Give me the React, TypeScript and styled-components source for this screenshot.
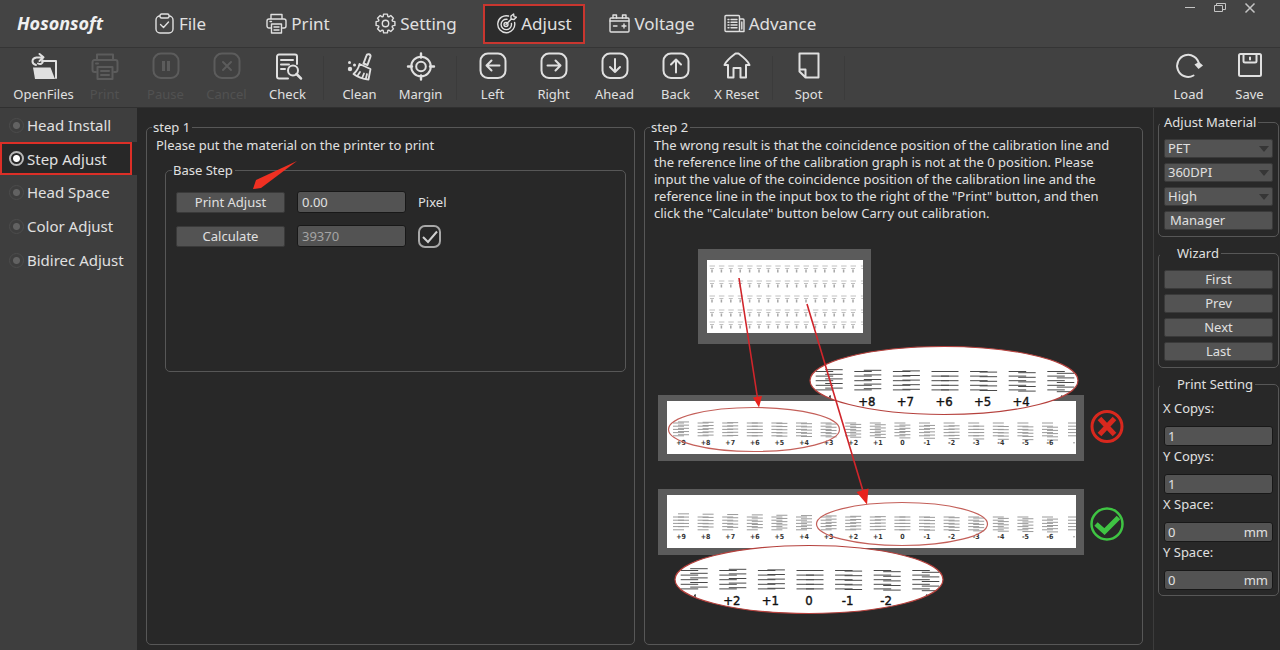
import React, { useState } from "react";
import styled, { createGlobalStyle, css } from "styled-components";

const GlobalStyle = createGlobalStyle`
  *, *::before, *::after { box-sizing: border-box; }
  body {
    margin: 0;
    background: #282828;
    color: #e0e0e0;
    font-family: "Noto Sans", "Open Sans", sans-serif;
    font-size: 13px;
    line-height: 18px;
  }
  button, input, select { font: inherit; color: inherit; }
`;

/* ---------- frame ---------- */

const Window = styled.div`
  min-height: 100vh;
  display: flex;
  flex-direction: column;
`;

const TitleBar = styled.header`
  position: relative;
  display: flex;
  height: 47px;
  background: #444444;
`;

const Logo = styled.div`
  width: 121px;
  padding: 10px 0 0 17px;
  font-family: "Open Sans", sans-serif;
  font-weight: 700;
  font-style: italic;
  font-size: 18px;
  line-height: 26px;
  color: #f0f0f0;
`;

const Menu = styled.nav`
  display: grid;
  grid-template-columns: repeat(6, 118px);
  align-items: center;
  justify-items: center;
`;

const MenuButton = styled.button<{ $active?: boolean }>`
  display: flex;
  align-items: center;
  gap: 4px;
  height: 40px;
  padding: 0 11px;
  border: 2px solid ${(p) => (p.$active ? "#c9362f" : "transparent")};
  background: ${(p) => (p.$active ? "#2c2c2c" : "transparent")};
  font-size: 17px;
  line-height: 24px;
`;

const WindowControls = styled.div`
  display: flex;
  gap: 8px;
  margin-left: auto;
  padding-right: 19px;
`;

const WindowButton = styled.button`
  display: block;
  width: 22px;
  height: 16px;
  padding: 0;
  border: 0;
  background: none;
  color: #c4c4c4;
`;

const Toolbar = styled.div`
  display: flex;
  height: 61px;
  padding: 4px 0 0 13px;
  border-top: 1px solid #353535;
  border-bottom: 1px solid #303030;
  background: #414141;
`;

const ToolButton = styled.button`
  display: flex;
  flex-direction: column;
  align-items: center;
  gap: 5px;
  width: 61px;
  padding: 0;
  border: 0;
  background: none;
  &:disabled { color: #5c5c5c; }
  &:disabled span { color: #515151; }
`;

const ToolLabel = styled.span`
  white-space: nowrap;
  line-height: 17px;
`;

const ToolDivider = styled.span`
  width: 11px;
  height: 44px;
  margin-top: 4px;
  background: linear-gradient(#3b3b3b, #3b3b3b) center / 1px 100% no-repeat;
`;

const ToolSpacer = styled.span`
  flex: 1;
`;

const Body = styled.div`
  flex: 1;
  display: grid;
  grid-template-columns: 137px minmax(0, 1fr) 127px;
`;

/* ---------- sidebar ---------- */

const Sidebar = styled.aside`
  display: flex;
  flex-direction: column;
  background: #3e3e3e;
`;

const SideItem = styled.label<{ $active: boolean }>`
  display: flex;
  align-items: center;
  gap: 3px;
  height: 34px;
  padding-left: 7px;
  border: 2px solid transparent;
  font-size: 15px;
  white-space: nowrap;
  ${(p) =>
    p.$active &&
    css`
      height: 33px;
      margin-right: 5px;
      border-color: #dc2f27;
      background: #282828;
      box-shadow: 5px 0 0 #282828;
    `}
`;

const SideRadio = styled.input`
  appearance: none;
  width: 15px;
  height: 15px;
  margin: 0;
  border: 1px solid #4c4c4c;
  border-radius: 50%;
  background: radial-gradient(circle, #626262 3px, transparent 4px);
  &:checked {
    border: 2px solid #b9b9b9;
    background: radial-gradient(circle, #ffffff 3px, transparent 4px);
  }
`;

/* ---------- groups ---------- */

const Main = styled.main`
  display: grid;
  grid-template-columns: 49fr 50fr;
  gap: 9px;
  padding: 10px 10px 5px 9px;
`;

const Group = styled.fieldset`
  min-width: 0;
  margin: 0;
  padding: 1px 8px 8px 9px;
  border: 1px solid #575757;
  border-radius: 5px;
`;

const GroupTitle = styled.legend<{ $indent?: number }>`
  margin-left: -4px;
  padding: 0 2px 0 ${(p) => p.$indent ?? 1}px;
  line-height: 18px;
`;

const BaseGroup = styled(Group)`
  min-height: 211px;
  margin-top: 7px;
  margin-left: 9px;
  padding: 12px 10px;
`;

const Note = styled.p`
  margin: 0;
  padding-right: 16px;
  line-height: 17px;
`;

const FormRows = styled.div`
  display: grid;
  grid-template-columns: 109px 109px auto;
  justify-content: start;
  align-items: center;
  gap: 12px;
`;

const PushButton = styled.button<{ $left?: boolean }>`
  width: 100%;
  height: ${(p) => (p.$left ? 19 : 21)}px;
  padding: 0 5px;
  border: 1px solid #3a3a3a;
  border-radius: 2px;
  background: #535353;
  line-height: 17px;
  text-align: ${(p) => (p.$left ? "left" : "center")};
`;

const WizardButton = styled(PushButton)`
  height: 19px;
`;

const Field = styled.input`
  min-width: 0;
  width: 100%;
  height: 22px;
  padding: 0 4px;
  border: 1px solid #181818;
  border-radius: 3px;
  background: #535353;
  outline: none;
  &:disabled { color: #a4a4a4; }
`;

const Confirm = styled.label`
  position: relative;
  display: block;
  width: 23px;
  height: 21px;
  svg { position: absolute; left: 0; top: -1px; pointer-events: none; }
`;

const RoundCheck = styled.input`
  appearance: none;
  display: block;
  width: 23px;
  height: 23px;
  margin: -1px 0;
  border: 2px solid #a8a8a8;
  border-radius: 7px;
`;

const StepOne = styled.div`
  position: relative;
`;

const Pointer = styled.svg`
  position: absolute;
  left: 96px;
  top: 23px;
  pointer-events: none;
`;

const Illustration = styled.svg`
  display: block;
  width: 480px;
  max-width: 100%;
  height: auto;
  margin-top: 18px;
`;

/* ---------- right panel ---------- */

const Panel = styled.aside`
  display: flex;
  flex-direction: column;
  gap: 7px;
  padding: 5px 1px 0 4px;
  border-left: 1px solid #3c3c3c;
`;

const PanelGroup = styled(Group)`
  display: flex;
  flex-direction: column;
  gap: 5px;
  padding: 8px 5px 6px;
`;

const PanelForm = styled(Group)`
  padding: 6px 5px 4px;
`;

const SelectBox = styled.div`
  position: relative;
  height: 19px;
  svg { position: absolute; right: 4px; top: 7px; pointer-events: none; }
`;

const Select = styled.select`
  appearance: none;
  display: block;
  width: 100%;
  height: 19px;
  padding: 0 3px;
  border: 1px solid #3a3a3a;
  border-radius: 2px;
  background: #535353;
  line-height: 17px;
`;

const FormItem = styled.label`
  display: block;
  height: 48px;
  margin-left: -1px;
`;

const NumberRow = styled.span`
  display: flex;
  align-items: center;
  height: 20px;
  margin: 9px 0 0 1px;
  padding-right: 4px;
  border: 1px solid #181818;
  border-radius: 3px;
  background: #535353;
`;

const NumberField = styled.input`
  flex: 1;
  min-width: 0;
  height: 18px;
  padding: 0 3px;
  border: 0;
  background: none;
  outline: none;
`;

/* ---------- icons ---------- */

const MenuIcon = ({ children }: { children: React.ReactNode }) => (
  <svg width="21" height="21" viewBox="0 0 21 21" fill="none" stroke="currentColor" strokeWidth="1.4" strokeLinejoin="round" strokeLinecap="round">
    {children}
  </svg>
);

const ToolIcon = ({ children }: { children: React.ReactNode }) => (
  <svg width="30" height="29" viewBox="0 0 30 29" fill="none" stroke="currentColor" strokeWidth="2" strokeLinejoin="round" strokeLinecap="round">
    {children}
  </svg>
);

const printerPaths = (
  <>
    <path d="M5 6V1.5h11V6M4.500 15H3a2 2 0 0 1-2-2V8a2 2 0 0 1 2-2h15a2 2 0 0 1 2 2v5a2 2 0 0 1-2 2h-1.500" />
    <path d="M5.500 11h10v9h-10zM4 8.500h1.500M8 14h5M8 17h5" />
  </>
);

const gear = Array.from({ length: 8 }, (_, i) => {
  const a = (i * Math.PI) / 4;
  const pt = (r: number, d: number) =>
    `${(10.5 + r * Math.cos(a + d)).toFixed(2)} ${(10.5 + r * Math.sin(a + d)).toFixed(2)}`;
  return `${i ? "L" : "M"}${pt(7.4, -0.32)}L${pt(9.6, -0.2)}L${pt(9.6, 0.2)}L${pt(7.4, 0.32)}`;
}).join("") + "Z";

const menuItems = [
  {
    label: "File",
    icon: <><rect x="2" y="3" width="17" height="17" rx="4" /><rect x="6" y="1" width="9" height="4" rx="1.500" fill="#444" /><path d="M6.500 11.500l3 3 5-5.500" /></>,
  },
  { label: "Print", icon: printerPaths },
  { label: "Setting", icon: <><path d={gear} /><circle cx="10.500" cy="10.500" r="3.200" /></> },
  {
    label: "Adjust",
    icon: <><path d="M12.500 3A8.500 8.500 0 1 0 18.600 9.500M11 6.300A5.200 5.200 0 1 0 15.400 10.500" /><circle cx="10" cy="11.500" r="2" /><path d="M10 11.500l5.500-5.700M15 6V3l2.600-2 .4 2.600 2.400.6L18 6.500z" /></>,
  },
  {
    label: "Voltage",
    icon: <><rect x="1" y="5" width="19" height="14" rx="1" /><path d="M1 8h19M4 5V2h3.500v3M13.500 5V2H17v3M4.500 13h3.500M13 13h4M15 11v4" /></>,
  },
  {
    label: "Advance",
    icon: <><rect x="1" y="2.500" width="14.500" height="16" rx="1" /><path d="M15.500 6H19a1 1 0 0 1 1 1v11.500h-4.500M17.800 9v7M4 6.500h1M7 6.500h6M4 9.200h1M7 9.200h6M4 12h1M7 12h6M4 14.800h1M7 14.800h6" /></>,
  },
];

const roundBox = <rect x="2.500" y="1.500" width="25" height="24.500" rx="7.500" />;

type Tool = { label: string; disabled?: boolean; icon: React.ReactNode };

const toolGroups: Tool[][] = [
  [
    {
      label: "OpenFiles",
      icon: <><path d="M13 9h14v17" /><path d="M4 15.500h17.500L26 27H6z" fill="currentColor" stroke="none" /><path d="M7 13C2.500 12 2 6.500 7.500 5.500l5.500-.3M10.500 2l4 3.300-4 3.700M14 8.500c0 3-2.500 4.500-5 3" /></>,
    },
    {
      label: "Print",
      disabled: true,
      icon: <g><path d="M7 8V2.500h16V8M6 20H4.500a2 2 0 0 1-2-2V10a2 2 0 0 1 2-2h21a2 2 0 0 1 2 2v8a2 2 0 0 1-2 2H24" /><path d="M7.500 15h15v12h-15zM11 19h8M11 23h8M6 11.500h2" /></g>,
    },
    { label: "Pause", disabled: true, icon: <>{roundBox}<path d="M12.500 9v10M17.500 9v10" strokeWidth="3" strokeLinecap="butt" /></> },
    { label: "Cancel", disabled: true, icon: <>{roundBox}<path d="M11 10l8 8M19 10l-8 8" /></> },
    {
      label: "Check",
      icon: <><path d="M15 26.500H6a2 2 0 0 1-2-2v-20a2 2 0 0 1 2-2h16a2 2 0 0 1 2 2V12M8 8h12M8 12.500h8M8 17h4" /><circle cx="20" cy="18.500" r="5" /><path d="M23.500 22l4.500 4.500" strokeWidth="2.500" /></>,
    },
  ],
  [
    {
      label: "Clean",
      icon: <><path d="M21.500 3.500c.5-2 4.500-1.500 4 1L22.500 13l-4-1.500z" /><path d="M14.500 12l11 5-2 10.500c-5-.5-11-2.500-15-5.500 3-2.500 5-5.500 6-10zM13 23l2-3M17.500 25l1.500-3.500M21 26l1-4" strokeWidth="1.800" /><circle cx="4.500" cy="10.500" r="1.500" fill="currentColor" stroke="none" /><circle cx="5" cy="17" r="2.200" fill="currentColor" stroke="none" /><circle cx="9.500" cy="13" r="1.500" fill="currentColor" stroke="none" /></>,
    },
    {
      label: "Margin",
      icon: <><circle cx="15" cy="14.500" r="9.800" /><circle cx="15" cy="14.500" r="4.800" /><path d="M15 1.500v4M15 23.500v4M2 14.500h4M24 14.500h4" strokeWidth="2.400" /></>,
    },
  ],
  [
    { label: "Left", icon: <>{roundBox}<path d="M21.500 13.500h-13M13.500 8.500l-5 5 5 5" /></> },
    { label: "Right", icon: <>{roundBox}<path d="M8.500 13.500h13M16.500 8.500l5 5-5 5" /></> },
    { label: "Ahead", icon: <>{roundBox}<path d="M15 7v13M10 15l5 5 5-5" /></> },
    { label: "Back", icon: <>{roundBox}<path d="M15 20.500v-13M10 12.500l5-5 5 5" /></> },
    { label: "X Reset", icon: <path d="M6 13H2.500c1-3 7-8.500 11-11.500h3c4 3 10 8.500 11 11.500H24v12.500h-5.500V16h-7v9.500H6z" /> },
  ],
  [{ label: "Spot", icon: <path d="M11.500 25.500H24.500V1.500h-19v18zM5.500 17.500h6v8" /> }],
];

const cornerTools: Tool[] = [
  { label: "Load", icon: <><path d="M19.500 23.500A11 11 0 1 1 25 12" /><path d="M20.500 12.500l4.500-2.500 4 3.500-4.500 3.500z" fill="currentColor" stroke="none" /></> },
  { label: "Save", icon: <><rect x="4" y="2" width="22" height="22" rx="1.500" /><path d="M8.500 2.500v6.500a1.500 1.500 0 0 0 1.500 1.500h10a1.500 1.500 0 0 0 1.500-1.500V2.500M15 5.500v2" /></> },
];

const ToolItem = ({ tool }: { tool: Tool }) => (
  <ToolButton type="button" disabled={tool.disabled}>
    <ToolIcon>{tool.icon}</ToolIcon>
    <ToolLabel>{tool.label}</ToolLabel>
  </ToolButton>
);

/* ---------- calibration drawing ---------- */

const signed = (n: number) => (n > 0 ? `+${n}` : `${n}`);

type MarkProps = { x: number; y: number; half: number; overlap: number; step: number; shift: number; color: string };

const Mark = ({ x, y, half, overlap, step, shift, color }: MarkProps) => (
  <g stroke={color} strokeWidth="1">
    {[0, 1, 2, 3, 4].map((i) => (
      <path key={i} d={`M${x - half} ${y + i * step}H${x + overlap}M${x - overlap} ${y + i * step + shift}H${x + half}`} />
    ))}
  </g>
);

const Strip = ({ y, zero }: { y: number; zero: number }) => (
  <g>
    <rect x="658" y={y - 6} width="426" height="66" fill="#5b5b5b" />
    <rect x="667" y={y} width="409" height="53" fill="#fff" />
    {Array.from({ length: 16 }, (_, i) => {
      const cx = 681 + i * 24.6;
      return (
        <g key={i}>
          <Mark x={cx} y={y + 22} half={8} overlap={3} step={3.2} shift={(i - zero) * 0.35} color="#9a9a9a" />
          <text x={cx} y={y + 44} textAnchor="middle" fontSize="7" fontWeight="700" fill="#333">{signed(9 - i)}</text>
        </g>
      );
    })}
    <path d={`M1068 ${y + 22}h8m-8 3.200h8m-8 3.200h8m-8 3.200h8m-8 3.200h8m-3 7h2`} stroke="#9a9a9a" />
  </g>
);

const Lens = ({ cx, cy, first, id }: { cx: number; cy: number; first: number; id: string }) => (
  <g>
    <clipPath id={id}><ellipse cx={cx} cy={cy} rx="134" ry="34" /></clipPath>
    <ellipse cx={cx} cy={cy} rx="134" ry="34" fill="#fff" />
    <g clipPath={`url(#${id})`}>
      {Array.from({ length: 7 }, (_, i) => {
        const x = cx + 1 + (i - 3) * 38.6;
        return (
          <g key={i}>
            <Mark x={x} y={cy - 9} half={13.5} overlap={4} step={4.6} shift={(i - 3) * 0.6} color="#4a4a4a" />
            {i > 0 && i < 6 ? (
              <text x={x - 1} y={cy + 25} textAnchor="middle" fontSize="13" fill="#111" stroke="#111" strokeWidth="0.400">{signed(first - i)}</text>
            ) : (
              <path d={`M${x} ${cy + 17}l1 -2v6`} stroke="#222" fill="none" />
            )}
          </g>
        );
      })}
    </g>
    <ellipse cx={cx} cy={cy} rx="134" ry="34" fill="none" stroke="#b5413d" strokeWidth="1.200" />
  </g>
);

const CalibrationGuide = () => (
  <Illustration viewBox="654 240 480 380" fontFamily="'Liberation Sans Narrow', 'DejaVu Sans Condensed', sans-serif" role="img" aria-label="Calibration guide">
    <rect x="698" y="249" width="173" height="95" fill="#5b5b5b" />
    <rect x="707" y="260" width="156" height="73" fill="#fff" />
    {[266, 281, 296, 310, 322].map((y) =>
      Array.from({ length: 17 }, (_, i) => {
        const x = 712 + i * 9.4;
        return (
          <g key={`${y}-${i}`} strokeWidth="1">
            <path d={i < 16 ? `M${x - 2.5} ${y}h5.5M${x - 2} ${y + 2.5}h4` : `M${x - 1.5} ${y}h2M${x - 1} ${y + 2.5}h1.500`} stroke="#c0c0c0" />
            {i < 16 && <path d={`M${x} ${y + 3.5}v3`} stroke="#a6a6a6" strokeWidth="1.500" />}
          </g>
        );
      })
    )}
    <Strip y={401} zero={3} />
    <Strip y={495} zero={9} />
    <ellipse cx="754" cy="429.500" rx="85.500" ry="22" fill="none" stroke="#c4605a" strokeWidth="1.200" />
    <ellipse cx="902" cy="524" rx="85.500" ry="21.500" fill="none" stroke="#c4605a" strokeWidth="1.200" />
    <Lens cx={944} cy={380.5} first={9} id="lens-wrong" />
    <Lens cx={809} cy={579.5} first={3} id="lens-right" />
    <g stroke="#d0252b" strokeWidth="1.600" fill="#e8221c">
      <path d="M739 278L757.500 398M807 304L863 491" fill="none" />
      <path d="M753 397.500l9-1.500-3 11.500zM856.500 492l12-3.500-1.500 16z" stroke="none" />
    </g>
    <g fill="none" stroke="#d8281e">
      <circle cx="1107" cy="426.500" r="15" strokeWidth="3" />
      <path d="M1099.500 418.500l15 16M1114.500 418.500l-15 16" strokeWidth="5" />
    </g>
    <g fill="none" stroke="#3fc443">
      <circle cx="1107" cy="524" r="15.500" strokeWidth="2.500" />
      <path d="M1096 524l8.500 7.500 14-14" strokeWidth="5" />
    </g>
  </Illustration>
);

/* ---------- page ---------- */

const modes = ["Head Install", "Step Adjust", "Head Space", "Color Adjust", "Bidirec Adjust"];
const materials = [["Material", "PET"], ["Resolution", "360DPI"], ["Quality", "High"]];
const wizard = ["First", "Prev", "Next", "Last"];
const printSettings = [["X Copys:", "1", ""], ["Y Copys:", "1", ""], ["X Space:", "0", "mm"], ["Y Space:", "0", "mm"]];

export default function App() {
  const [mode, setMode] = useState("Step Adjust");

  return (
    <Window>
      <GlobalStyle />
      <TitleBar>
        <Logo>Hosonsoft</Logo>
        <Menu>
          {menuItems.map((m) => (
            <MenuButton key={m.label} type="button" $active={m.label === "Adjust"}>
              <MenuIcon>{m.icon}</MenuIcon>
              {m.label}
            </MenuButton>
          ))}
        </Menu>
        <WindowControls>
          <WindowButton type="button" aria-label="Minimize">
            <svg width="22" height="16" viewBox="0 0 22 16" fill="none" stroke="currentColor"><path d="M6 7.500h10" /></svg>
          </WindowButton>
          <WindowButton type="button" aria-label="Restore">
            <svg width="22" height="16" viewBox="0 0 22 16" fill="none" stroke="currentColor"><path d="M5.500 5.500h8v6h-8zM7.500 5.500v-2h9v6h-3" /></svg>
          </WindowButton>
          <WindowButton type="button" aria-label="Close">
            <svg width="22" height="16" viewBox="0 0 22 16" fill="none" stroke="currentColor" strokeWidth="1.500"><path d="M6.500 3.500l9 9M15.500 3.500l-9 9" /></svg>
          </WindowButton>
        </WindowControls>
      </TitleBar>

      <Toolbar>
        {toolGroups.map((group, i) => (
          <React.Fragment key={i}>
            {group.map((t) => <ToolItem key={t.label} tool={t} />)}
            <ToolDivider />
          </React.Fragment>
        ))}
        <ToolSpacer />
        {cornerTools.map((t) => <ToolItem key={t.label} tool={t} />)}
      </Toolbar>

      <Body>
        <Sidebar>
          {modes.map((m) => (
            <SideItem key={m} $active={m === mode}>
              <SideRadio type="radio" name="mode" checked={m === mode} onChange={() => setMode(m)} />
              {m}
            </SideItem>
          ))}
        </Sidebar>

        <Main>
          <Group>
            <GroupTitle>step 1</GroupTitle>
            <StepOne>
              <Note>Please put the material on the printer to print</Note>
              <BaseGroup>
                <GroupTitle>Base Step</GroupTitle>
                <FormRows>
                  <PushButton type="button">Print Adjust</PushButton>
                  <Field id="pixel" defaultValue="0.00" />
                  <label htmlFor="pixel">Pixel</label>
                  <PushButton type="button">Calculate</PushButton>
                  <Field aria-label="Calculated step" defaultValue="39370" disabled />
                  <Confirm>
                    <RoundCheck type="checkbox" defaultChecked aria-label="Apply step" />
                    <svg width="23" height="23" viewBox="0 0 23 23" fill="none" stroke="#d0d0d0" strokeWidth="2"><path d="M5 12l5 5L19 6.500" /></svg>
                  </Confirm>
                </FormRows>
              </BaseGroup>
              <Pointer width="46" height="32" viewBox="0 0 46 32">
                <path d="M45 1L4 20l-3 9 8-1z" fill="#f03022" />
              </Pointer>
            </StepOne>
          </Group>

          <Group>
            <GroupTitle>step 2</GroupTitle>
            <Note>
              The wrong result is that the coincidence position of the calibration line and the reference line of the
              calibration graph is not at the 0 position. Please input the value of the coincidence position of the
              calibration line and the reference line in the input box to the right of the "Print" button, and then
              click the "Calculate" button below Carry out calibration.
            </Note>
            <CalibrationGuide />
          </Group>
        </Main>

        <Panel>
          <PanelGroup>
            <GroupTitle $indent={4}>Adjust Material</GroupTitle>
            {materials.map(([name, value]) => (
              <SelectBox key={name}>
                <Select aria-label={name}><option>{value}</option></Select>
                <svg width="10" height="6" viewBox="0 0 10 6"><path d="M0 0h10L5 6z" fill="#363636" /></svg>
              </SelectBox>
            ))}
            <PushButton type="button" $left>Manager</PushButton>
          </PanelGroup>

          <PanelGroup>
            <GroupTitle $indent={17}>Wizard</GroupTitle>
            {wizard.map((w) => <WizardButton key={w} type="button">{w}</WizardButton>)}
          </PanelGroup>

          <PanelForm>
            <GroupTitle $indent={17}>Print Setting</GroupTitle>
            {printSettings.map(([label, value, unit]) => (
              <FormItem key={label}>
                {label}
                <NumberRow>
                  <NumberField defaultValue={value} />
                  {unit}
                </NumberRow>
              </FormItem>
            ))}
          </PanelForm>
        </Panel>
      </Body>
    </Window>
  );
}
